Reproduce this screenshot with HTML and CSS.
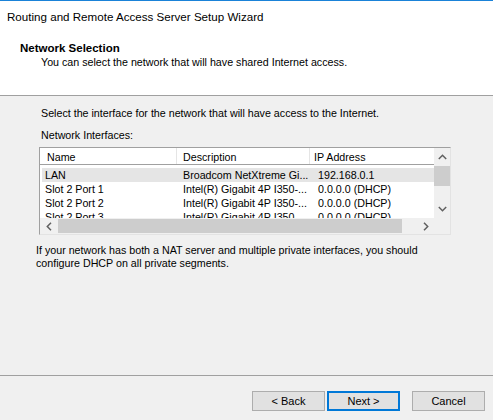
FILE: index.html
```html
<!DOCTYPE html>
<html>
<head>
<meta charset="utf-8">
<link rel="stylesheet" href="styles.css">
</head>
<body>
<div class="window">
  <div class="accent"></div>
  <header class="header">
    <div class="title">Routing and Remote Access Server Setup Wizard</div>
    <div class="heading">Network Selection</div>
    <div class="subtitle">You can select the network that will have shared Internet access.</div>
  </header>
  <main class="content">
    <p class="intro">Select the interface for the network that will have access to the Internet.</p>
    <p class="label">Network Interfaces:</p>
    <div class="listview">
      <div class="lv-area">
        <div class="lv-header">
          <div class="hcol c1">Name</div>
          <div class="hcol c2">Description</div>
          <div class="hcol c3">IP Address</div>
        </div>
        <div class="lv-rows">
          <div class="row selected">
            <div class="cell c1">LAN</div>
            <div class="cell c2">Broadcom NetXtreme Gi...</div>
            <div class="cell c3">192.168.0.1</div>
          </div>
          <div class="row">
            <div class="cell c1">Slot 2 Port 1</div>
            <div class="cell c2">Intel(R) Gigabit 4P I350-...</div>
            <div class="cell c3">0.0.0.0 (DHCP)</div>
          </div>
          <div class="row">
            <div class="cell c1">Slot 2 Port 2</div>
            <div class="cell c2">Intel(R) Gigabit 4P I350-...</div>
            <div class="cell c3">0.0.0.0 (DHCP)</div>
          </div>
          <div class="row">
            <div class="cell c1">Slot 2 Port 3</div>
            <div class="cell c2">Intel(R) Gigabit 4P I350-...</div>
            <div class="cell c3">0.0.0.0 (DHCP)</div>
          </div>
        </div>
      </div>
      <div class="vscroll">
        <div class="sbtn vbtn">
          <svg width="9" height="6" viewBox="0 0 9 6"><polyline points="0.8,5 4.5,1.3 8.2,5" fill="none" stroke="#606060" stroke-width="1.5"/></svg>
        </div>
        <div class="vthumb"></div>
        <div class="vspace"></div>
        <div class="sbtn vbtn">
          <svg width="9" height="6" viewBox="0 0 9 6"><polyline points="0.8,1 4.5,4.7 8.2,1" fill="none" stroke="#606060" stroke-width="1.5"/></svg>
        </div>
      </div>
      <div class="hscroll">
        <div class="sbtn hbtn">
          <svg width="6" height="9" viewBox="0 0 6 9"><polyline points="5,0.8 1.3,4.5 5,8.2" fill="none" stroke="#606060" stroke-width="1.5"/></svg>
        </div>
        <div class="hthumb"></div>
        <div class="hspace"></div>
        <div class="sbtn hbtn">
          <svg width="6" height="9" viewBox="0 0 6 9"><polyline points="1,0.8 4.7,4.5 1,8.2" fill="none" stroke="#606060" stroke-width="1.5"/></svg>
        </div>
      </div>
      <div class="corner"></div>
    </div>
    <p class="note">If your network has both a NAT server and multiple private interfaces, you should<br>configure DHCP on all private segments.</p>
  </main>
  <footer class="footer">
    <div class="buttons">
      <button class="btn">&lt; Back</button>
      <button class="btn primary">Next &gt;</button>
      <button class="btn cancel">Cancel</button>
    </div>
  </footer>
</div>
</body>
</html>
```

FILE: styles.css
```css
* { box-sizing: border-box; }
html, body { margin: 0; padding: 0; }
body {
  background: #f0f0f0;
  font-family: "Liberation Sans", Arial, sans-serif;
  font-size: 10.7px;
  color: #000;
}
.window {
  width: 493px;
  height: 420px;
  display: flex;
  flex-direction: column;
  overflow: hidden;
}
.accent { height: 1px; background: #1a82d8; flex: none; }
.header {
  background: #fff;
  height: 95px;
  flex: none;
  border-bottom: 1px solid #a0a0a0;
  padding-top: 8px;
}
.title { padding-left: 7px; line-height: 15px; font-size: 11.6px; }
.heading { margin-top: 17px; padding-left: 20px; font-weight: bold; font-size: 11.5px; line-height: 14px; }
.subtitle { padding-left: 41px; line-height: 14px; }

.content { flex: 1; padding-top: 10px; }
.content p { margin: 0; line-height: 14px; }
.intro { padding-left: 41px; }
.label { padding-left: 41px; margin-top: 8px !important; }

.listview {
  margin: 5px 0 0 39px;
  width: 412px;
  height: 88px;
  border: 1px solid;
  border-color: #a0a0a0 #e3e3e3 #e3e3e3 #a0a0a0;
  background: #fff;
  display: grid;
  grid-template-columns: 394px 16px;
  grid-template-rows: 70px 16px;
}
.lv-area { overflow: hidden; background: #fff; }
.lv-header {
  display: flex;
  height: 17px;
  border-bottom: 1px solid #a0a0a0;
  line-height: 14px;
}
.hcol { padding-top: 2px; white-space: nowrap; }
.hcol.c1 { width: 137px; padding-left: 7px; border-right: 1px solid #e5e5e5; }
.hcol.c2 { width: 133px; padding-left: 6px; border-right: 1px solid #e5e5e5; }
.hcol.c3 { flex: 1; padding-left: 4px; }
.lv-rows { padding-top: 3px; }
.row { display: flex; height: 14px; line-height: 14px; margin-left: 2px; white-space: nowrap; }
.row.selected { background: #e5e5e5; }
.cell.c1 { width: 135px; padding-left: 3px; }
.cell.c2 { width: 133px; padding-left: 6px; }
.cell.c3 { flex: 1; padding-left: 8px; }

.vscroll {
  background: #f0f0f0;
  display: flex;
  flex-direction: column;
}
.sbtn { display: flex; align-items: center; justify-content: center; flex: none; }
.vbtn { height: 18px; }
.vthumb { height: 20px; background: #cdcdcd; flex: none; }
.vspace { flex: 1; }
.hscroll { background: #f0f0f0; display: flex; }
.hbtn { width: 17px; }
.hthumb { width: 344px; margin: 1px 0 1px 1px; background: #cdcdcd; flex: none; }
.hspace { flex: 1; }
.corner { background: #f0f0f0; }

.note { padding-left: 36px; margin-top: 9px !important; line-height: 13px !important; }

.footer {
  flex: none;
  height: 45px;
  border-top: 1px solid #a0a0a0;
  padding-top: 15px;
}
.buttons { display: flex; justify-content: flex-end; padding-right: 8px; }
.btn {
  width: 73px;
  height: 20px;
  padding: 0;
  font-family: inherit;
  font-size: 11px;
  background: #e1e1e1;
  border: 1px solid #adadad;
  color: #000;
  margin-left: 2px;
}
.btn.primary { border: 2px solid #0078d7; }
.btn.cancel { margin-left: 12px; }
```
